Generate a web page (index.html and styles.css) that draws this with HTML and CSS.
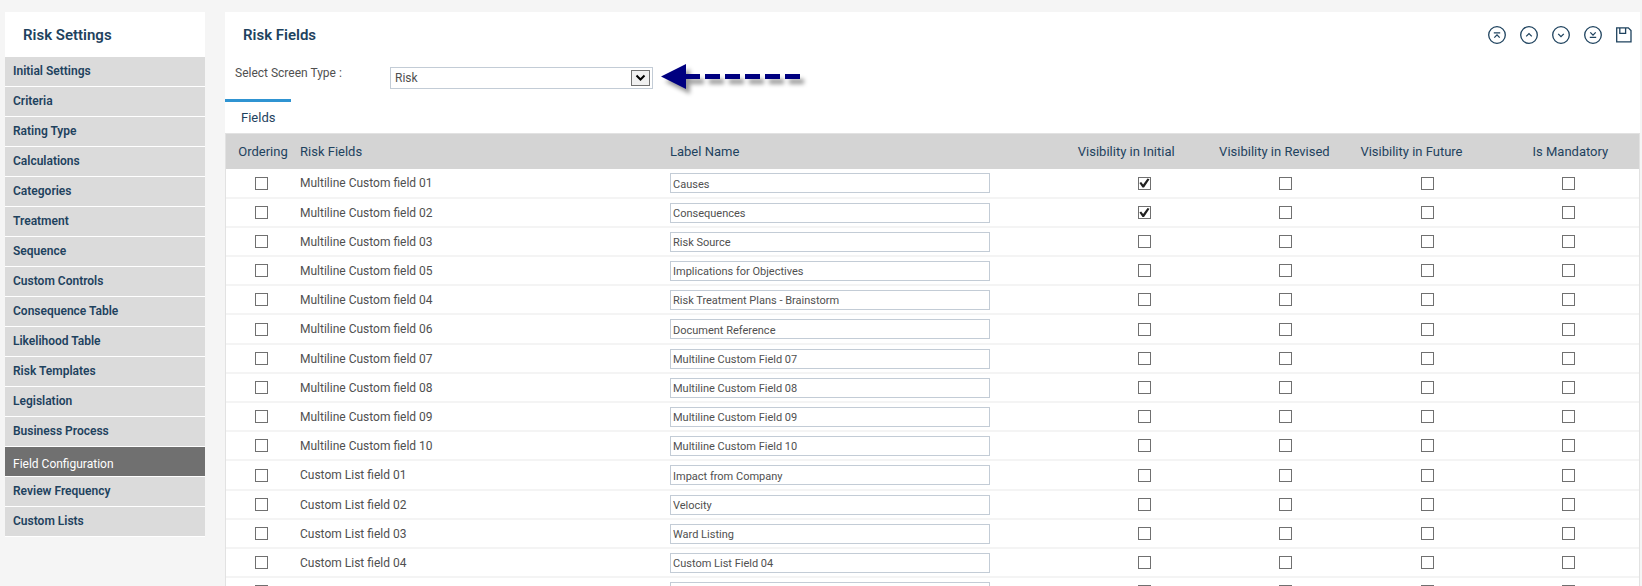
FILE: index.html
```html
<!DOCTYPE html>
<html lang="en">

<head>
    <meta charset="UTF-8">
    <meta name="viewport" content="width=device-width, initial-scale=1.0">
    <title>Risk Fields</title>
    <link rel="stylesheet" href="styles.css">
</head>

<body>
    <nav class="sidebar">
        <h2>Risk Settings</h2>
        <ul>
            <li><a href="#">Initial Settings</a></li>
            <li><a href="#">Criteria</a></li>
            <li><a href="#">Rating Type</a></li>
            <li><a href="#">Calculations</a></li>
            <li><a href="#">Categories</a></li>
            <li><a href="#">Treatment</a></li>
            <li><a href="#">Sequence</a></li>
            <li><a href="#">Custom Controls</a></li>
            <li><a href="#">Consequence Table</a></li>
            <li><a href="#">Likelihood Table</a></li>
            <li><a href="#">Risk Templates</a></li>
            <li><a href="#">Legislation</a></li>
            <li><a href="#">Business Process</a></li>
            <li><a href="#" class="active">Field Configuration</a></li>
            <li><a href="#">Review Frequency</a></li>
            <li><a href="#">Custom Lists</a></li>
        </ul>
    </nav>

    <main class="content">
        <header class="content-header">
            <h2>Risk Fields</h2>
            <div class="toolbar">
                <button type="button" aria-label="Move to top">
                    <svg width="18" height="18" viewBox="0 0 18 18"><circle cx="9" cy="9" r="8.3" /><path d="M5.8 6.8h6.4M6.3 11.6L9 8.9l2.7 2.7" /></svg>
                </button>
                <button type="button" aria-label="Move up">
                    <svg width="18" height="18" viewBox="0 0 18 18"><circle cx="9" cy="9" r="8.3" /><path d="M6.2 10.4L9 7.6l2.8 2.8" /></svg>
                </button>
                <button type="button" aria-label="Move down">
                    <svg width="18" height="18" viewBox="0 0 18 18"><circle cx="9" cy="9" r="8.3" /><path d="M6.2 7.9L9 10.7l2.8-2.8" /></svg>
                </button>
                <button type="button" aria-label="Move to bottom">
                    <svg width="18" height="18" viewBox="0 0 18 18"><circle cx="9" cy="9" r="8.3" /><path d="M6.3 6.4L9 9.1l2.7-2.7M5.8 11.4h6.4" /></svg>
                </button>
                <button type="button" aria-label="Save">
                    <svg width="16" height="16" viewBox="0 0 16 16"><path d="M.7 .9h11.6l2.7 2.7v11.3H.7zM3.8 .9v5.4h5.8V.9" /></svg>
                </button>
            </div>
        </header>

        <div class="screen-type">
            <label for="screenType">Select Screen Type :</label>
            <div class="select-box">
                <select id="screenType">
                    <option>Risk</option>
                </select>
                <span class="select-arrow">
                    <svg width="11" height="8" viewBox="0 0 11 8"><path d="M1.5 1.5l4 4 4-4" /></svg>
                </span>
            </div>
            <svg class="pointer" width="150" height="36" viewBox="0 0 150 36">
                <path d="M0 13.5L25 1v10h14v5H25v10z" />
                <path d="M44 11h15v5H44zM64 11h15v5H64zM84 11h15v5H84zM104 11h15v5h-15zM124 11h15v5h-15z" />
            </svg>
        </div>

        <div class="tabs">
            <a href="#" class="tab">Fields</a>
        </div>

        <table>
            <colgroup>
                <col class="col-order">
                <col class="col-name">
                <col>
                <col class="col-check">
                <col class="col-check">
                <col class="col-check">
                <col class="col-check">
            </colgroup>
            <thead>
                <tr>
                    <th class="center">Ordering</th>
                    <th>Risk Fields</th>
                    <th>Label Name</th>
                    <th>Visibility in Initial</th>
                    <th>Visibility in Revised</th>
                    <th>Visibility in Future</th>
                    <th class="center">Is Mandatory</th>
                </tr>
            </thead>
            <tbody id="fieldRows"></tbody>
        </table>
    </main>

    <script src="script.js"></script>
</body>

</html>
```
FILE: styles.css
```css
* {
    box-sizing: border-box;
}

body {
    font-family: Roboto, Arial, sans-serif;
    font-size: 13px;
    color: #505050;
    background-color: #f5f5f5;
    margin: 0;
    padding: 12px 2px 0 5px;
    display: flex;
    align-items: flex-start;
    gap: 20px;
}

h2 {
    margin: 0;
    font-size: 15px;
    line-height: 20px;
    font-weight: 600;
    color: #1e425e;
}

.sidebar {
    width: 200px;
    flex-shrink: 0;
    background-color: #fff;
}

.sidebar h2 {
    padding: 13px 18px 12px;
}

.sidebar ul {
    list-style: none;
    margin: 0;
    padding: 0;
}

.sidebar a {
    display: block;
    height: 30px;
    padding: 0 8px;
    border-bottom: 1px solid #fff;
    background-color: #dbdbdb;
    color: #1e425e;
    font-size: 12px;
    font-weight: 600;
    line-height: 28px;
    text-decoration: none;
}

.sidebar a.active {
    background-color: #707070;
    color: #fff;
    font-weight: 400;
    line-height: 34px;
}

.content {
    flex: 1;
    min-width: 0;
    background-color: #fff;
}

.content-header {
    display: flex;
    justify-content: space-between;
    align-items: center;
    padding: 13px 8px 12px 18px;
}

.toolbar {
    display: flex;
    align-items: center;
    gap: 14px;
}

.toolbar button {
    display: block;
    padding: 0;
    border: none;
    background: none;
    cursor: pointer;
}

.toolbar svg {
    display: block;
    fill: none;
    stroke: #1e425e;
    stroke-width: 1.3;
}

.screen-type {
    display: flex;
    align-items: flex-start;
    height: 42px;
    padding: 6px 0 0 10px;
}

.screen-type label {
    width: 155px;
    font-size: 12px;
    line-height: 20px;
}

.select-box {
    position: relative;
    width: 263px;
    margin-top: 4px;
}

.select-box select {
    appearance: none;
    display: block;
    width: 100%;
    height: 22px;
    padding: 0 24px 0 4px;
    border: 1px solid #c3ccd6;
    border-radius: 0;
    background-color: #fff;
    color: #505050;
    font-family: inherit;
    font-size: 12px;
}

.select-arrow {
    position: absolute;
    top: 3px;
    right: 3px;
    display: flex;
    justify-content: center;
    align-items: center;
    width: 19px;
    height: 16px;
    border: 1px solid #707070;
    background-color: #f0f0f0;
    pointer-events: none;
}

.select-arrow svg {
    fill: none;
    stroke: #000;
    stroke-width: 2;
}

.pointer {
    margin-left: 8px;
    fill: #000080;
    filter: drop-shadow(4px 5px 2px rgba(0, 0, 0, 0.4));
}

.tabs {
    height: 34px;
}

.tab {
    display: inline-block;
    height: 34px;
    padding: 0 16px;
    border-top: 3px solid #2f94d2;
    color: #1e425e;
    line-height: 31px;
    text-decoration: none;
}

table {
    width: 100%;
    table-layout: fixed;
    border-collapse: separate;
    border-spacing: 0;
    border: 1px solid #e2e2e2;
}

.col-order {
    width: 70px;
}

.col-name {
    width: 370px;
}

.col-check {
    width: 10%;
}

th {
    height: 35px;
    padding: 0 4px;
    background-color: #d4d4d4;
    color: #1e425e;
    font-weight: 400;
    text-align: left;
}

th.center {
    padding: 0 4px 0 8px;
    text-align: center;
}

td {
    height: 29px;
    padding: 0 4px;
    border-bottom: 2px solid #f4f4f4;
    font-size: 12px;
}

tr:nth-child(5n+1) td {
    height: 30px;
}

td input[type="text"] {
    display: block;
    width: 320px;
    max-width: 100%;
    height: 20px;
    padding: 2px 2px 0;
    border: 1px solid #c3ccd6;
    color: #505050;
    font-family: inherit;
    font-size: 11px;
}

input[type="checkbox"] {
    appearance: none;
    display: block;
    width: 13px;
    height: 13px;
    margin: 0 auto;
    border: 1px solid #707070;
    background-color: #fff;
}

input[type="checkbox"]:checked::before {
    content: "";
    display: block;
    width: 11px;
    height: 11px;
    background-color: #222;
    clip-path: polygon(4% 50%, 20% 42%, 38% 64%, 78% 8%, 96% 16%, 46% 92%, 32% 92%);
}
```
FILE: script.js
```js
const fields = [
    ['Multiline Custom field 01', 'Causes', true],
    ['Multiline Custom field 02', 'Consequences', true],
    ['Multiline Custom field 03', 'Risk Source'],
    ['Multiline Custom field 05', 'Implications for Objectives'],
    ['Multiline Custom field 04', 'Risk Treatment Plans - Brainstorm'],
    ['Multiline Custom field 06', 'Document Reference'],
    ['Multiline Custom field 07', 'Multiline Custom Field 07'],
    ['Multiline Custom field 08', 'Multiline Custom Field 08'],
    ['Multiline Custom field 09', 'Multiline Custom Field 09'],
    ['Multiline Custom field 10', 'Multiline Custom Field 10'],
    ['Custom List field 01', 'Impact from Company'],
    ['Custom List field 02', 'Velocity'],
    ['Custom List field 03', 'Ward Listing'],
    ['Custom List field 04', 'Custom List Field 04'],
    ['', '']
];

function checkbox(label, checked) {
    return `<td><input type="checkbox" aria-label="${label}"${checked ? ' checked' : ''}></td>`;
}

document.getElementById('fieldRows').innerHTML = fields.map(([name, label, initial]) => `
    <tr>
        ${checkbox('Ordering ' + name)}
        <td>${name}</td>
        <td><input type="text" aria-label="Label for ${name}" value="${label}"></td>
        ${checkbox('Visibility in Initial', initial)}
        ${checkbox('Visibility in Revised')}
        ${checkbox('Visibility in Future')}
        ${checkbox('Is Mandatory')}
    </tr>`).join('');
```
